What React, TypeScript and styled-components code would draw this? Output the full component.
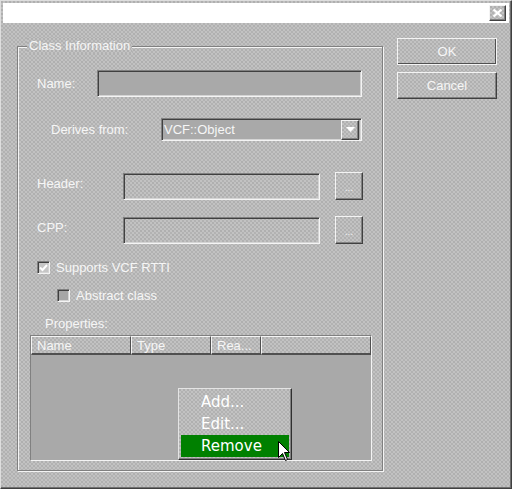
import React from "react";
import styled, { createGlobalStyle, css } from "styled-components";

const GlobalStyle = createGlobalStyle`
  html, body { margin: 0; padding: 0; background: #c0c0c0; }
  body { font-family: "Liberation Sans", Arial, sans-serif; }
  * { box-sizing: border-box; }
`;

const texture = css`
  background-color: #c2c2c2;
  background-image:
    radial-gradient(circle at 1px 1px, #a6a6a6 0.6px, transparent 0.9px),
    radial-gradient(circle at 1px 1px, #aaaaaa 0.6px, transparent 0.9px);
  background-size: 4px 4px, 4px 4px;
  background-position: 0 0, 2px 2px;
`;

const raised = css`
  border-top: 1px solid #f4f4f4;
  border-left: 1px solid #f4f4f4;
  border-right: 1px solid #404040;
  border-bottom: 1px solid #404040;
  box-shadow: inset -1px -1px 0 #808080;
`;

const sunken = css`
  border-top: 1px solid #808080;
  border-left: 1px solid #808080;
  border-right: 1px solid #f4f4f4;
  border-bottom: 1px solid #f4f4f4;
  box-shadow: inset 1px 1px 0 #404040, inset -1px -1px 0 #d4d4d4;
`;

const Window = styled.div`
  ${texture};
  width: 512px;
  height: 489px;
  border-top: 1px solid #dedede;
  border-left: 1px solid #dedede;
  border-right: 1px solid #404040;
  border-bottom: 1px solid #404040;
  box-shadow: inset -1px -1px 0 #707070;
  padding: 2px 2px 0 2px;
  display: flex;
  flex-direction: column;
  position: relative;
  overflow: hidden;
`;

const TitleBar = styled.div`
  height: 20px;
  background: #ffffff;
  display: flex;
  justify-content: flex-end;
  align-items: center;
  padding-right: 3px;
`;

const CloseButton = styled.div`
  ${texture};
  ${raised};
  width: 17px;
  height: 16px;
  display: flex;
  align-items: center;
  justify-content: center;
`;

const Body = styled.div`
  display: flex;
  align-items: flex-start;
  padding: 15px 0 0 14px;
`;

const Group = styled.div`
  position: relative;
  width: 366px;
  height: 425px;
  margin-top: 8px;
  border: 1px solid #808080;
  box-shadow: inset 1px 1px 0 #f4f4f4, 1px 1px 0 #f4f4f4;
  padding: 0 10px 0 12px;
  display: flex;
  flex-direction: column;
`;

const Legend = styled.div`
  ${texture};
  position: absolute;
  top: -9px;
  left: 9px;
  padding: 0 2px;
  font-size: 13px;
  line-height: 15px;
  color: #f6f6f6;
`;

const Text = styled.span`
  font-size: 13px;
  line-height: 15px;
  color: #f6f6f6;
  white-space: nowrap;
`;

const Row = styled.div<{ $top: number; $indent?: number; $height: number }>`
  display: flex;
  align-items: center;
  margin-top: ${(p) => p.$top}px;
  margin-left: ${(p) => p.$indent ?? 0}px;
  height: ${(p) => p.$height}px;
`;

const Label = styled(Text)<{ $width: number; $raise?: boolean }>`
  width: ${(p) => p.$width}px;
  flex: none;
  ${(p) => p.$raise && css`align-self: flex-start; margin-top: 4px;`}
`;

const Input = styled.div<{ $width: number; $filled?: boolean }>`
  ${sunken};
  width: ${(p) => p.$width}px;
  height: 27px;
  flex: none;
  ${(p) => (p.$filled ? css`background: #a9a9a9;` : texture)};
`;

const Combo = styled.div`
  ${sunken};
  background: #a9a9a9;
  width: 201px;
  height: 23px;
  display: flex;
  align-items: center;
  justify-content: space-between;
  padding: 1px 2px 1px 2px;
`;

const ComboText = styled(Text)`
  padding-left: 0;
`;

const DropButton = styled.div`
  ${texture};
  ${raised};
  width: 18px;
  height: 20px;
  display: flex;
  align-items: center;
  justify-content: center;
`;

const BrowseButton = styled.div`
  ${texture};
  ${raised};
  width: 28px;
  height: 28px;
  margin-left: 15px;
  display: flex;
  align-items: center;
  justify-content: center;
  padding-top: 4px;
  font-size: 10px;
  line-height: 10px;
  letter-spacing: 0px;
  color: #f6f6f6;
`;

const CheckBox = styled.div<{ $light?: boolean }>`
  ${sunken};
  width: 13px;
  height: 13px;
  background: ${(p) => (p.$light ? "#c6c6c6" : "#a6a6a6")};
  display: flex;
  align-items: center;
  justify-content: center;
  margin-right: 6px;
  flex: none;
`;

const List = styled.div`
  position: relative;
  margin-top: 4px;
  width: 342px;
  height: 126px;
  border-top: 1px solid #808080;
  border-left: 1px solid #808080;
  border-right: 1px solid #f4f4f4;
  border-bottom: 1px solid #f4f4f4;
  background: #a9a9a9;
  display: flex;
  flex-direction: column;
`;

const HeaderRow = styled.div`
  display: flex;
  height: 19px;
  flex: none;
`;

const HeaderCell = styled.div<{ $width?: number }>`
  ${texture};
  border-top: 1px solid #f4f4f4;
  border-left: 1px solid #f4f4f4;
  border-right: 1px solid #505050;
  border-bottom: 2px solid #505050;
  ${(p) => (p.$width ? css`width: ${p.$width}px; flex: none;` : css`flex: 1;`)};
  padding-left: 5px;
  display: flex;
  align-items: center;
  font-size: 13px;
  color: #f6f6f6;
`;

const Menu = styled.div`
  ${texture};
  position: absolute;
  left: 147px;
  top: 52px;
  width: 114px;
  height: 72px;
  border-top: 1px solid #e4e4e4;
  border-left: 1px solid #e4e4e4;
  border-right: 1px solid #303030;
  border-bottom: 1px solid #303030;
  box-shadow: inset -1px -1px 0 #808080;
  padding: 2px 2px 2px 2px;
  display: flex;
  flex-direction: column;
`;

const MenuItem = styled.div<{ $active?: boolean }>`
  height: 22px;
  display: flex;
  align-items: center;
  padding-left: 20px;
  font-family: "DejaVu Sans", Verdana, sans-serif;
  font-size: 15px;
  color: #ffffff;
  background: ${(p) => (p.$active ? "#008000" : "transparent")};
`;

const Cursor = styled.svg`
  position: absolute;
  left: 277px;
  top: 440px;
`;

const ButtonColumn = styled.div`
  margin-left: 14px;
  display: flex;
  flex-direction: column;
  gap: 7px;
`;

const DialogButton = styled.div<{ $default?: boolean }>`
  ${texture};
  width: 100px;
  height: 27px;
  display: flex;
  align-items: center;
  justify-content: center;
  font-size: 13px;
  color: #f6f6f6;
  ${(p) =>
    p.$default
      ? css`
          border: 1px solid #f4f4f4;
          box-shadow: inset -1px -1px 0 #505050;
        `
      : raised};
`;

export default function App() {
  return (
    <>
      <GlobalStyle />
      <Window>
        <TitleBar>
          <CloseButton>
            <svg width="11" height="10" viewBox="0 0 11 10">
              <path d="M1.5 1.5 L9.5 8.5 M9.5 1.5 L1.5 8.5" stroke="#ffffff" strokeWidth="2.2" />
            </svg>
          </CloseButton>
        </TitleBar>
        <Body>
          <Group>
            <Legend>Class Information</Legend>
            <Row $top={23} $indent={7} $height={27}>
              <Label $width={60}>Name:</Label>
              <Input $width={265} $filled />
            </Row>
            <Row $top={21} $indent={21} $height={23}>
              <Label $width={110}>Derives from:</Label>
              <Combo>
                <ComboText>VCF::Object</ComboText>
                <DropButton>
                  <svg width="9" height="5" viewBox="0 0 9 5">
                    <path d="M0 0 H9 L4.5 5 Z" fill="#ffffff" />
                  </svg>
                </DropButton>
              </Combo>
            </Row>
            <Row $top={31} $indent={7} $height={28}>
              <Label $width={86} $raise>Header:</Label>
              <Input $width={197} />
              <BrowseButton>...</BrowseButton>
            </Row>
            <Row $top={16} $indent={7} $height={28}>
              <Label $width={86} $raise>CPP:</Label>
              <Input $width={197} />
              <BrowseButton>...</BrowseButton>
            </Row>
            <Row $top={17} $indent={7} $height={13}>
              <CheckBox $light>
                <svg width="9" height="8" viewBox="0 0 9 8">
                  <path d="M1 3.5 L3.5 6 L8 1" stroke="#ffffff" strokeWidth="2" fill="none" />
                </svg>
              </CheckBox>
              <Text>Supports VCF RTTI</Text>
            </Row>
            <Row $top={15} $indent={27} $height={13}>
              <CheckBox />
              <Text>Abstract class</Text>
            </Row>
            <Row $top={14} $indent={15} $height={15}>
              <Text>Properties:</Text>
            </Row>
            <List>
              <HeaderRow>
                <HeaderCell $width={100}>Name</HeaderCell>
                <HeaderCell $width={80}>Type</HeaderCell>
                <HeaderCell $width={50}>Rea...</HeaderCell>
                <HeaderCell />
              </HeaderRow>
              <Menu>
                <MenuItem>Add...</MenuItem>
                <MenuItem>Edit...</MenuItem>
                <MenuItem $active>Remove</MenuItem>
              </Menu>
            </List>
          </Group>
          <ButtonColumn>
            <DialogButton $default>OK</DialogButton>
            <DialogButton>Cancel</DialogButton>
          </ButtonColumn>
        </Body>
        <Cursor width="13" height="21" viewBox="0 0 13 21">
          <path
            d="M0.5 0.5 L0.5 16.5 L4.5 12.5 L7.5 19.5 L9.5 18.5 L6.5 11.5 L11.5 11.5 Z"
            fill="#ffffff"
            stroke="#000000"
            strokeWidth="1"
          />
        </Cursor>
      </Window>
    </>
  );
}
